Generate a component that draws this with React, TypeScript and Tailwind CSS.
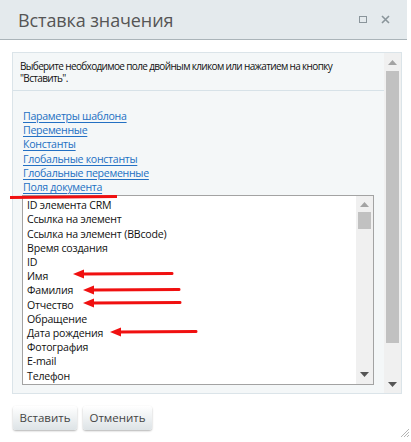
import React from "react";

const links = [
  "Параметры шаблона",
  "Переменные",
  "Константы",
  "Глобальные константы",
  "Глобальные переменные",
  "Поля документа",
];

const items = [
  "ID элемента CRM",
  "Ссылка на элемент",
  "Ссылка на элемент (BBcode)",
  "Время создания",
  "ID",
  "Имя",
  "Фамилия",
  "Отчество",
  "Обращение",
  "Дата рождения",
  "Фотография",
  "E-mail",
  "Телефон",
  "Мобильный",
];

function Arrow({ x1, x2, y }: { x1: number; x2: number; y: number }) {
  return (
    <g>
      <polygon points={`${x1},${y} ${x1 + 11},${y - 4.5} ${x1 + 11},${y + 4.5}`} fill="#f01010" />
      <line x1={x1 + 9} y1={y} x2={x2} y2={y - 0.5} stroke="#f01010" strokeWidth={3} strokeLinecap="round" />
    </g>
  );
}

export default function App() {
  return (
    <div
      className="relative w-[411px] h-[442px] bg-white overflow-hidden"
      style={{ fontFamily: '"Open Sans", "Noto Sans", sans-serif' }}
    >
      {/* Title bar */}
      <div className="h-[40px] bg-[#e4eaed] border-b border-[#aab4b9] flex items-center justify-between pl-[18px] pr-[17px] mr-[4px]">
        <span className="text-[18px] text-[#555] leading-none tracking-[-0.1px]">Вставка значения</span>
        <div className="flex items-center gap-[14px] text-[#8a959b]">
          <span className="block w-[8px] h-[7px] border border-[#8a959b]" />
          <svg width="9" height="9" viewBox="0 0 9 9">
            <path d="M1 1L8 8M8 1L1 8" stroke="#8a959b" strokeWidth="1.6" />
          </svg>
        </div>
      </div>

      {/* Content box */}
      <div className="ml-[12px] mt-[12px] w-[390px] h-[342px] border border-[#dbe4e9] flex">
        <div className="flex-1 bg-[#f4f7f8] overflow-hidden">
          <div className="h-[38px] border-b border-[#d7e2e8] pl-[7px] pt-[7px] text-[10px] leading-[12px] text-[#111] whitespace-nowrap tracking-[-0.65px]">
            Выберите необходимое поле двойным кликом или нажатием на кнопку
            <br />
            "Вставить".
          </div>
          <div className="pt-[18px] pl-[10px] flex flex-col items-start">
            {links.map((l) => (
              <a key={l} className="text-[10.6px] leading-[14.2px] text-[#2370c3] underline underline-offset-[2px] tracking-[-0.3px]">
                {l}
              </a>
            ))}
          </div>
          <div className="ml-[9px] mt-[1px] w-[352px] h-[190px] border border-[#a3a3a3] bg-white flex">
            <div className="flex-1 overflow-hidden pl-[4px] pt-[2px]">
              {items.map((it) => (
                <div key={it} className="text-[10.6px] leading-[14.2px] text-[#111] whitespace-nowrap tracking-[-0.2px]">
                  {it}
                </div>
              ))}
            </div>
            <div className="w-[17px] bg-[#f0f0f0] flex flex-col items-center">
              <svg width="9" height="5" viewBox="0 0 9 5" className="mt-[6px]">
                <polygon points="0,5 4.5,0 9,5" fill="#a3a3a3" />
              </svg>
              <div className="mt-[5px] w-[13px] h-[17px] bg-[#c1c1c1]" />
              <div className="flex-1" />
              <svg width="9" height="5" viewBox="0 0 9 5" className="mb-[7px]">
                <polygon points="0,0 4.5,5 9,0" fill="#555" />
              </svg>
            </div>
          </div>
          <div className="pl-[10px]">
            <a className="text-[10.6px] leading-[14px] text-[#2370c3] underline tracking-[-0.3px]">Дополнительные результаты</a>
          </div>
        </div>
        <div className="w-[17px] bg-[#f0f0f0] flex flex-col items-center">
          <svg width="9" height="5" viewBox="0 0 9 5" className="mt-[7px]">
            <polygon points="0,5 4.5,0 9,5" fill="#a3a3a3" />
          </svg>
          <div className="mt-[6px] w-[13px] h-[272px] bg-[#c1c1c1]" />
          <div className="flex-1" />
          <svg width="9" height="5" viewBox="0 0 9 5" className="mb-[6px]">
            <polygon points="0,0 4.5,5 9,0" fill="#555" />
          </svg>
        </div>
      </div>

      {/* Buttons */}
      <div className="flex gap-[6px] ml-[13px] mt-[12px]">
        <button className="w-[64px] h-[24px] rounded-[3px] bg-gradient-to-b from-[#ffffff] to-[#dde3e6] shadow-[0_1px_2px_rgba(0,0,0,0.3)] text-[11.5px] text-[#444]">
          Вставить
        </button>
        <button className="w-[69px] h-[24px] rounded-[3px] bg-gradient-to-b from-[#ffffff] to-[#dde3e6] shadow-[0_1px_2px_rgba(0,0,0,0.3)] text-[11.5px] text-[#444]">
          Отменить
        </button>
      </div>

      {/* Resize grip */}
      <svg className="absolute right-[1px] bottom-[4px]" width="10" height="10" viewBox="0 0 10 10">
        <path d="M9 1L1 9M9 4L4 9M9 7L7 9" stroke="#b5b5b5" strokeWidth="1" />
      </svg>

      {/* Annotations */}
      <svg className="absolute inset-0 pointer-events-none" width="411" height="442">
        <line x1={10} y1={197.5} x2={117} y2={196.5} stroke="#f01010" strokeWidth={3} />
        <Arrow x1={73} x2={172} y={274} />
        <Arrow x1={83} x2={179} y={290} />
        <Arrow x1={83} x2={180} y={303} />
        <Arrow x1={110} x2={196} y={332} />
      </svg>
    </div>
  );
}
